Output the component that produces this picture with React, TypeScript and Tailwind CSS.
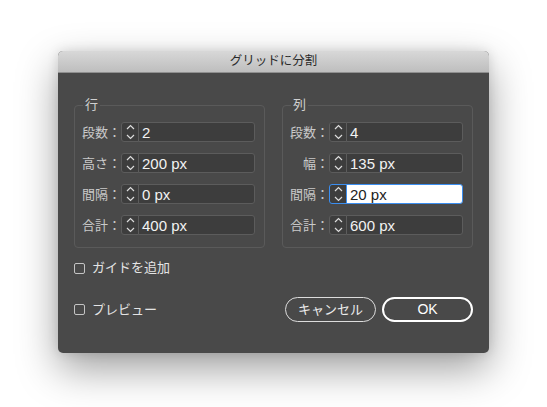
import { ReactNode } from 'react';

const Stepper = ({ focused }: { focused?: boolean }) => (
  <div
    className={
      'flex h-full w-[18px] shrink-0 items-center justify-center rounded-l-[3px] border bg-[#3d3d3d] ' +
      (focused ? 'border-[#3b8ef0]' : 'border-[#5c5c5c]')
    }
  >
    <svg width="9" height="16" viewBox="0 0 9 16" fill="none" stroke="#dcdcdc" strokeWidth="1.2">
      <path d="M1 5 L4.5 1.5 L8 5" />
      <path d="M1 11 L4.5 14.5 L8 11" />
    </svg>
  </div>
);

const Row = ({ label, value, focused }: { label: string; value: string; focused?: boolean }) => (
  <div className="flex h-[20px] items-center">
    <span className="flex w-[38px] shrink-0 justify-end whitespace-nowrap text-[13px] leading-none text-[#c9c9c9]">
      {label}
    </span>
    <Stepper focused={focused} />
    <div
      className={
        'ml-[-1px] flex h-full flex-1 items-center rounded-r-[3px] border pl-[3px] text-[15px] leading-none ' +
        (focused
          ? 'border-[#3b8ef0] bg-white text-[#222]'
          : 'border-[#5c5c5c] bg-[#3d3d3d] text-[#f2f2f2]')
      }
    >
      {value}
    </div>
  </div>
);

const Group = ({ title, children }: { title: string; children: ReactNode }) => (
  <fieldset className="flex-1 rounded-[4px] border border-[#5a5a5a] pb-[12px] pl-[8px] pr-[9px] pt-[9px]">
    <legend className="px-[2px] text-[13px] leading-[16px] text-[#d0d0d0]">{title}</legend>
    <div className="flex flex-col gap-[11px]">{children}</div>
  </fieldset>
);

const Checkbox = ({ label }: { label: string }) => (
  <label className="flex items-center gap-[7px] text-[13px] leading-[16px] text-[#e4e4e4]">
    <span className="h-[11px] w-[11px] rounded-[2px] border border-[#c4c4c4]" />
    {label}
  </label>
);

export default function App() {
  return (
    <div className="min-h-[407px] w-[547px] bg-white pl-[58px] pt-[51px] font-['Liberation_Sans','Noto_Sans_CJK_JP',sans-serif]">
      <div className="flex h-[302px] w-[431px] flex-col overflow-hidden rounded-[5px] bg-[#494949] shadow-[0_16px_40px_rgba(0,0,0,0.38),0_0_12px_rgba(0,0,0,0.12)]">
        <div className="flex h-[22px] shrink-0 items-center justify-center border-b border-[#8f8f8f] bg-gradient-to-b from-[#d8d8d8] to-[#bebebe] text-[12.5px] text-[#2a2a2a]">
          グリッドに分割
        </div>
        <div className="flex flex-1 flex-col px-[16px] pt-[24px]">
          <div className="flex gap-[17px]">
            <Group title="行">
              <Row label="段数：" value="2" />
              <Row label="高さ：" value="200 px" />
              <Row label="間隔：" value="0 px" />
              <Row label="合計：" value="400 px" />
            </Group>
            <Group title="列">
              <Row label="段数：" value="4" />
              <Row label="幅：" value="135 px" />
              <Row label="間隔：" value="20 px" focused />
              <Row label="合計：" value="600 px" />
            </Group>
          </div>
          <div className="mt-[12px]">
            <Checkbox label="ガイドを追加" />
          </div>
          <div className="mt-[21px] flex items-center justify-between">
            <Checkbox label="プレビュー" />
            <div className="flex gap-[6px]">
              <button className="flex h-[25px] w-[91px] items-center justify-center rounded-full border border-[#dcdcdc] text-[13px] text-[#ececec]">
                キャンセル
              </button>
              <button className="flex h-[25px] w-[91px] items-center justify-center rounded-full border-2 border-white text-[14px] text-white">
                OK
              </button>
            </div>
          </div>
        </div>
      </div>
    </div>
  );
}
